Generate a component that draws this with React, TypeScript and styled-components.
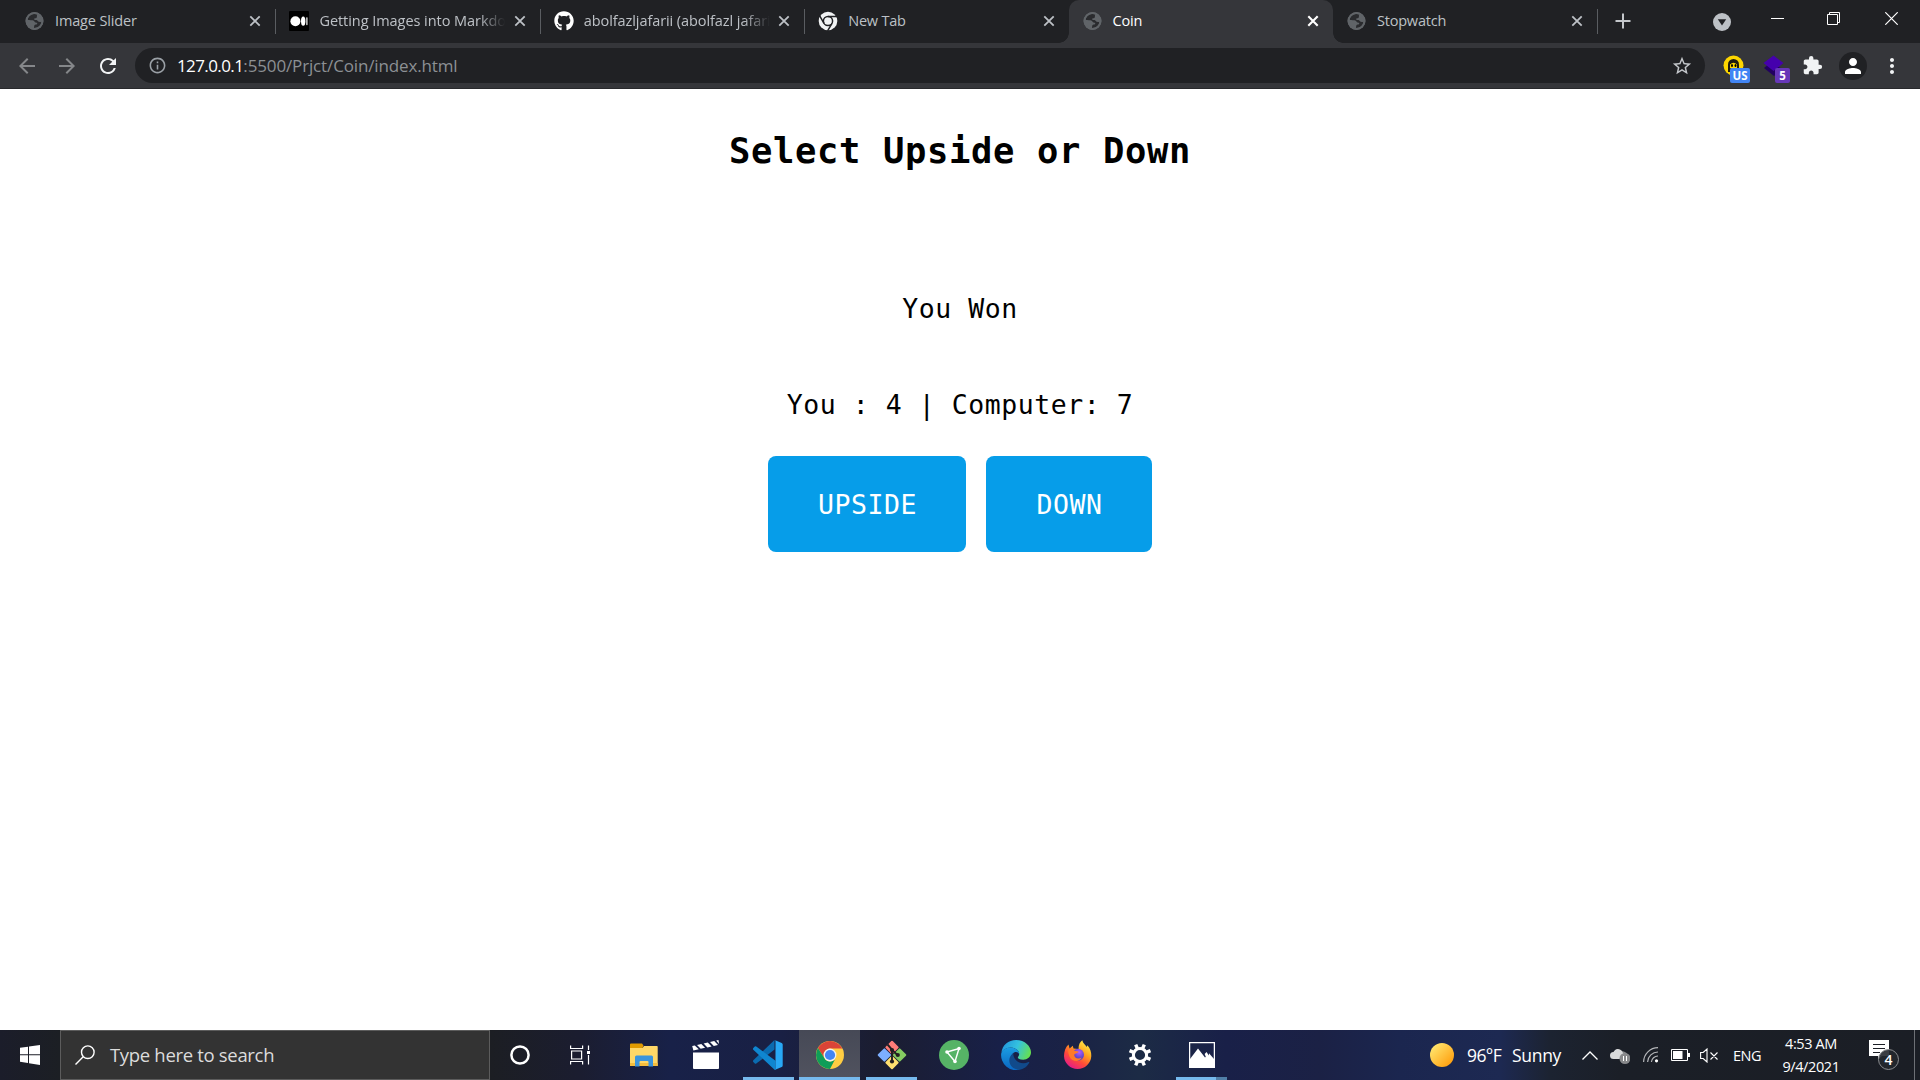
import React from "react";
import styled, { createGlobalStyle, css } from "styled-components";
import { MdExtension, MdPerson, MdRefresh, MdStarBorder, MdInfoOutline, MdArrowBack, MdArrowForward, MdMoreVert } from "react-icons/md";
import { FaGithub } from "react-icons/fa";

const Global = createGlobalStyle`
  * { box-sizing: border-box; }
  html, body, #root { margin: 0; height: 100%; }
  body { overflow: hidden; background: #fff; font-family: "Open Sans", "Noto Sans", sans-serif; }
  svg { display: block; flex: none; }
`;

const Screen = styled.div`
  width: 1920px;
  height: 1080px;
  display: flex;
  flex-direction: column;
`;

const TabStrip = styled.div`
  height: 43px;
  flex: none;
  background: #202124;
  display: flex;
  padding-left: 11px;
`;

const Tab = styled.div<{ $active?: boolean; $line?: boolean }>`
  position: relative;
  width: 264.4px;
  height: 43px;
  flex: none;
  display: flex;
  align-items: center;
  padding: 0 11px 1px 14px;
  color: ${(p) => (p.$active ? "#fff" : "#bdc1c6")};
  ${(p) =>
    p.$line &&
    css`
      &::after {
        content: "";
        position: absolute;
        right: -1px;
        top: 9px;
        width: 1px;
        height: 25px;
        background: #5a5d61;
      }
    `}
  ${(p) =>
    p.$active &&
    css`
      background: #35363a;
      border-radius: 10px 10px 0 0;
      &::before,
      &::after {
        content: "";
        position: absolute;
        bottom: 0;
        width: 10px;
        height: 10px;
      }
      &::before {
        left: -10px;
        background: radial-gradient(circle at 0 0, transparent 9.5px, #35363a 10px);
      }
      &::after {
        right: -10px;
        background: radial-gradient(circle at 100% 0, transparent 9.5px, #35363a 10px);
      }
    `}
`;

const TabTitle = styled.div<{ $fade?: boolean; $spacing: number }>`
  margin-left: 10px;
  width: 188px;
  font-size: 14.5px;
  line-height: 20px;
  letter-spacing: ${(p) => p.$spacing}px;
  white-space: nowrap;
  ${(p) => p.$fade && css`mask-image: linear-gradient(90deg, #000 85%, transparent 99%);`}
`;

const TabClose = styled.div`
  margin-left: auto;
  width: 18px;
  display: flex;
  justify-content: center;
`;

const NewTab = styled.div`
  margin: 13px 0 0 18px;
`;

const WindowControls = styled.div`
  margin-left: auto;
  display: flex;
  align-items: flex-start;
  padding: 12px 22px 0 0;
`;

const ControlSlot = styled.div<{ $gap: number; $drop?: number }>`
  margin-right: ${(p) => p.$gap}px;
  padding-top: ${(p) => p.$drop ?? 0}px;
`;

const Toolbar = styled.div`
  height: 46px;
  flex: none;
  background: #35363a;
  border-bottom: 1px solid #28292c;
  display: flex;
  align-items: center;
  padding-left: 15px;
  color: #f1f3f4;
`;

const NavButton = styled.div<{ $dim?: boolean; $gap: number }>`
  display: flex;
  margin-right: ${(p) => p.$gap}px;
  color: ${(p) => (p.$dim ? "#85878a" : "#f1f3f4")};
`;

const AddressBar = styled.div`
  width: 1570px;
  height: 35px;
  border-radius: 18px;
  background: #202124;
  display: flex;
  align-items: center;
  padding: 0 12px 0 13px;
  color: #9aa0a6;
`;

const Url = styled.div`
  margin-left: 10px;
  flex: 1;
  font-size: 17px;
  line-height: 24px;
  letter-spacing: -0.14px;
  color: #8c9094;
  white-space: nowrap;
`;

const Host = styled.span`
  color: #fff;
  letter-spacing: -0.6px;
`;

const Extension = styled.div<{ $gap: number }>`
  position: relative;
  display: flex;
  margin-left: ${(p) => p.$gap}px;
`;

const Badge = styled.span<{ $color: string; $width: number }>`
  position: absolute;
  left: ${(p) => (p.$width > 16 ? 7 : 12)}px;
  top: 13px;
  width: ${(p) => p.$width}px;
  height: 15px;
  border-radius: 2px;
  background: ${(p) => p.$color};
  color: #fff;
  font: 700 11.5px/16px "Open Sans", sans-serif;
  text-align: center;
`;

const Avatar = styled.div`
  margin-left: 16px;
  width: 28px;
  height: 28px;
  border-radius: 50%;
  background: #202124;
  display: grid;
  place-items: center;
`;

const Game = styled.main`
  flex: 1;
  background: #fff;
  color: #000;
  display: flex;
  flex-direction: column;
  align-items: center;
  font-family: "DejaVu Sans Mono", monospace;
`;

const Heading = styled.h1`
  margin: 39px 0 0;
  font-size: 35.5px;
  line-height: 46px;
  letter-spacing: 0.63px;
  font-weight: 700;
`;

const Line = styled.p<{ $top: number }>`
  margin: ${(p) => p.$top}px 0 0;
  font-size: 26.5px;
  line-height: 36px;
  letter-spacing: 0.55px;
  white-space: pre;
`;

const Choices = styled.div`
  margin-top: 33px;
  display: flex;
  gap: 20px;
`;

const Choice = styled.button<{ $width: number }>`
  width: ${(p) => p.$width}px;
  height: 96px;
  padding: 1px 0 0 1px;
  border: 0;
  border-radius: 8px;
  background: #069de9;
  color: #fff;
  font: 26.5px/36px "DejaVu Sans Mono", monospace;
  letter-spacing: 0.55px;
`;

const Taskbar = styled.div`
  height: 50px;
  flex: none;
  display: flex;
  align-items: center;
  color: #fff;
  background: linear-gradient(
    90deg,
    #1b1d2a 0, #1c1f24 60px, #1c1e23 490px, #1b1d30 580px, #182148 670px, #192044 780px,
    #1b1d30 880px, #182048 1000px, #1a2245 1070px, #1c2b45 1140px, #192048 1225px,
    #1b2145 1320px, #1b264f 1400px, #1d2952 1500px, #1c2331 1550px, #1b1f27 1620px, #1b1e25 1920px
  );
`;

const Start = styled.div`
  width: 60px;
  display: grid;
  place-items: center;
`;

const Search = styled.div`
  width: 430px;
  height: 50px;
  border: 1px solid #5c5c5c;
  background: #333;
  display: flex;
  align-items: center;
  padding: 0 0 1px 14px;
  gap: 15px;
  color: #dcdcdc;
  font-size: 18.5px;
  letter-spacing: -0.32px;
`;

const TaskButton = styled.div<{ $width?: number; $active?: boolean; $line?: number; $indent?: number }>`
  position: relative;
  width: ${(p) => p.$width ?? 62}px;
  height: 50px;
  padding-left: ${(p) => p.$indent ?? 0}px;
  display: grid;
  place-items: center;
  ${(p) => p.$active && css`background: linear-gradient(#464956, #51535f);`}
  &::after {
    content: "";
    position: absolute;
    bottom: 0;
    left: 50%;
    height: 3px;
    width: ${(p) => p.$line ?? 0}px;
    margin-left: ${(p) => -(p.$line ?? 0) / 2}px;
    background: #76b9ed;
  }
`;

const SecondWindow = styled.span`
  position: absolute;
  z-index: 1;
  bottom: 0;
  left: 45px;
  width: 11px;
  height: 3px;
  background: #517fa8;
`;

const Tray = styled.div`
  margin-left: auto;
  height: 50px;
  display: flex;
  align-items: center;
`;

const TrayItem = styled.div<{ $gap: number }>`
  margin-right: ${(p) => p.$gap}px;
`;

const TrayText = styled.div<{ $size: number; $width: number; $spacing?: number }>`
  width: ${(p) => p.$width}px;
  font-size: ${(p) => p.$size}px;
  line-height: 23px;
  letter-spacing: ${(p) => p.$spacing ?? 0}px;
  white-space: nowrap;
`;

const Clock = styled.div`
  width: 60px;
  margin: 0 28px 0 19px;
  font-size: 14.5px;
  line-height: 23px;
  letter-spacing: -0.4px;
  text-align: center;
  white-space: nowrap;
`;

const Notice = styled.div`
  position: relative;
  width: 30px;
  height: 30px;
`;

const Count = styled.span`
  position: absolute;
  left: 9px;
  top: 9px;
  width: 21px;
  height: 21px;
  border-radius: 50%;
  border: 1px solid #8b8d90;
  background: rgba(36, 39, 45, 0.9);
  font: 600 14px/19px "Open Sans", sans-serif;
  text-align: center;
`;

const ShowDesktop = styled.div`
  margin-left: 15px;
  width: 6px;
  height: 50px;
  border-left: 1px solid #6d7075;
`;

const Globe = () => (
  <svg width="20" height="20" viewBox="0 0 20 20">
    <circle cx="9.500" cy="10" r="9" fill="#606468" />
    <path d="M9.500 3C6 3 3 5.500 2.600 9c1.400 0 2.400.3 3.800.2 1.500 0 2.500.4 3.200 1.500.4.900 1.500.800 2.500 1 .5.900-.2 1.700-1.300 1.900-1.300.2-1.800.8-1.700 3.300 3.600.2 6.800-2.300 7.300-6.100-1.600.5-3 .2-3.700-.9-.6-1-1.900-.8-2.800-.9-.9-.4-1-1.600.1-1.800 1.300 0 2.100-.7 1.900-1.800-.1-.9.1-1.500.600-2A7 7 0 0 0 9.500 3z" fill="#2a2b2e" />
    <circle cx="9.500" cy="10" r="8" fill="none" stroke="#606468" strokeWidth="1.800" />
  </svg>
);

const Medium = () => (
  <svg width="20" height="20" viewBox="0 0 20 20">
    <rect width="20" height="20" rx="1" fill="#000" />
    <circle cx="6.4" cy="10.2" r="5" fill="#fff" />
    <ellipse cx="14.2" cy="10.2" rx="2.2" ry="4.6" fill="#fff" />
    <rect x="17.3" y="6.2" width="1.2" height="8" rx=".6" fill="#fff" />
  </svg>
);

const ChromeMono = () => (
  <svg width="20" height="20" viewBox="0 0 20 20">
    <circle cx="10" cy="10" r="9.3" fill="#f1f3f4" />
    <circle cx="10" cy="10" r="4.6" fill="none" stroke="#202124" strokeWidth="1.5" />
    <path d="M10 5.4h9M6 12.3 1.7 4.9M14 12.3l-4.4 7.5" stroke="#202124" strokeWidth="1.5" />
  </svg>
);

const Cross = ({ bold }: { bold?: boolean }) => (
  <svg width="12" height="12" viewBox="0 0 12 12">
    <path d="m1.3 1.3 9.4 9.4m0-9.4-9.4 9.4" stroke="currentColor" strokeWidth={bold ? 2.1 : 1.8} />
  </svg>
);

const tabs = [
  { title: "Image Slider", icon: <Globe />, line: true, spacing: -0.15 },
  { title: "Getting Images into Markdo", icon: <Medium />, line: true, fade: true, spacing: -0.05 },
  { title: "abolfazljafarii (abolfazl jafari", icon: <FaGithub size={20} color="#fff" />, line: true, fade: true, spacing: -0.08 },
  { title: "New Tab", icon: <ChromeMono />, spacing: -0.2 },
  { title: "Coin", icon: <Globe />, active: true, spacing: -0.2 },
  { title: "Stopwatch", icon: <Globe />, line: true, spacing: -0.2 },
];

const Folder = () => (
  <svg width="28" height="24" viewBox="0 0 28 24">
    <path d="M0 1.5Q0 .5 1 .5h11l1.5 2L12 6H0z" fill="#e09a00" />
    <path d="M0 5h12.5L14 3h13q.7 0 .7.8V23H0z" fill="#ffd767" />
    <path d="M0 20h27.7v3H0z" fill="#f5bd3d" />
    <path d="M5 23.6V14q0-1.5 1.5-1.5h15q1.5 0 1.5 1.5v9.6h-4.5V19q0-1-1-1h-7q-1 0-1 1v4.6z" fill="#3b94dd" />
  </svg>
);

const Clapper = () => (
  <svg width="28" height="30" viewBox="0 0 28 30">
    <path d="M1 12.5h26V28q0 1-1 1H2q-1 0-1-1z" fill="#fff" />
    <path d="M.2 6 2.8 5.4l4 3.8L1.4 10.5zM5 4.9l4.3-1 3.8 3.900-4.400 1zM11.600 3.400l4.200-1 3.800 4-4.200 1zM18 1.900l4.200-1 3.800 4-4.200 1zM24.200.5l2.300-.5.5 4z" fill="#fff" />
  </svg>
);

const VsCode = () => (
  <svg width="32" height="32" viewBox="0 0 32 32">
    <path d="M22.500 1v9.500L4.300 24.600q-.8.500-1.500 0L1.300 23q-.7-.9 0-1.800z" fill="#0b6bb0" />
    <path d="m1.300 9 1.500-1.500q.7-.6 1.500 0L23.500 21.800V31q-.7 0-1.200-.6L1.300 10.800q-.7-.9 0-1.800z" fill="#0f86d0" />
    <path d="m22.500 1 7.200 3q1 .5 1 1.500v21q0 1-1 1.500l-7.200 3q1 .2 1-1.400V2.400q0-1.600-1-1.400z" fill="#28a8f5" />
  </svg>
);

const Chrome = () => (
  <svg width="28" height="28" viewBox="0 0 28 28">
    <circle cx="14" cy="14" r="14" fill="#ffcd42" />
    <path d="M1.9 7A14 14 0 0 1 26.1 7L26.1 7.6H14A6.4 6.4 0 0 0 8.5 17.2z" fill="#db4437" />
    <path d="M1.9 7A14 14 0 0 0 14 28l5.6-10.800A6.4 6.4 0 0 1 8.500 17.200z" fill="#0f9d58" />
    <circle cx="14" cy="14" r="6.4" fill="#f1f1f1" />
    <circle cx="14" cy="14" r="5.1" fill="#4285f4" />
  </svg>
);

const Git = () => (
  <svg width="30" height="30" viewBox="0 0 30 30">
    <g transform="rotate(45 15 15)">
      <rect x="4.6" y="4.6" width="10" height="10" rx="1" fill="#ff7c78" />
      <rect x="15.4" y="4.6" width="10" height="10" rx="1" fill="#85cc61" />
      <rect x="15.4" y="15.4" width="10" height="10" rx="1" fill="#ffe070" />
      <rect x="4.6" y="15.4" width="10" height="10" rx="1" fill="#7caeff" />
    </g>
    <path d="M10.500 4.500 15 9.500V21M15 10l5.500 5" stroke="#231f20" strokeWidth="1.900" fill="none" />
    <circle cx="15" cy="10" r="2.100" fill="#231f20" />
    <circle cx="15" cy="21.500" r="2.100" fill="#231f20" />
    <circle cx="20.800" cy="15" r="2.100" fill="#231f20" />
  </svg>
);

const GreenTriangle = () => (
  <svg width="30" height="30" viewBox="0 0 30 30">
    <circle cx="15" cy="15" r="15" fill="#56b366" />
    <path d="M8 12 20 8.500 16 21.500z" fill="none" stroke="#fff" strokeWidth="1.400" />
    <circle cx="8" cy="12" r="1.800" fill="#fff" />
    <circle cx="20" cy="8.500" r="1.800" fill="#fff" />
    <circle cx="16" cy="21.500" r="1.800" fill="#fff" />
  </svg>
);

const Edge = () => (
  <svg width="30" height="30" viewBox="0 0 30 30">
    <defs>
      <linearGradient id="edgeTop" x1="0" y1=".3" x2="1" y2=".6">
        <stop offset="0" stopColor="#2196dc" />
        <stop offset=".5" stopColor="#34c2df" />
        <stop offset="1" stopColor="#66e04f" />
      </linearGradient>
      <linearGradient id="edgeBody" x1="0" y1="0" x2="0" y2="1">
        <stop offset="0" stopColor="#1b9de2" />
        <stop offset="1" stopColor="#0a66c2" />
      </linearGradient>
    </defs>
    <path d="M.3 13C1.3 5 7.400 0 15 0c9 0 15 6.500 15 12.300 0 4.600-3.700 7.500-7.700 7.500-3.700 0-5.500-1.300-5.500-2.300 0-.9 1.400-1.300 1.400-3.500 0-3.500-3.800-6.500-8.700-6.500C5 7.500 1 10.700.3 13z" fill="url(#edgeTop)" />
    <path d="M.2 13.500C1.200 10 5 7.500 9.500 7.500c4.900 0 8.700 3 8.700 6.500-1-1.800-2.500-2.300-4-2-3 .6-5 5-3.400 9.500 1 3.500 3.700 6.700 8 8.200A15 15 0 0 1 .2 13.500z" fill="url(#edgeBody)" />
    <path d="M12.500 13C9 15.500 7.500 19 8.700 23c1 3.700 5 6.700 9.500 6.700 4.400-.5 8.300-3.300 10-7 .3-.7-.2-1-.8-.7-4.700 2.300-10.700 1.200-13.400-3-1.300-2-2-4-1.500-6z" fill="#114a8b" />
  </svg>
);

const Firefox = () => (
  <svg width="30" height="30" viewBox="0 0 30 30">
    <defs>
      <linearGradient id="foxBody" x1=".85" y1=".05" x2=".25" y2="1">
        <stop offset="0" stopColor="#fff04a" />
        <stop offset=".35" stopColor="#ffa51f" />
        <stop offset=".65" stopColor="#ff4b38" />
        <stop offset="1" stopColor="#e3178f" />
      </linearGradient>
      <radialGradient id="foxCore" cx=".6" cy=".3">
        <stop offset="0" stopColor="#b45bff" />
        <stop offset="1" stopColor="#5a45c8" />
      </radialGradient>
    </defs>
    <path d="M5.500 4.500 6.600 8.400 9.800 5.800 10.500 8.500 15.500 9C15.500 4.500 17 2 19.300.3c.5 3 2.700 4.200 4.500 6.700l.6-1.700c3 3.400 4 6.900 3.900 10.700A13.700 13.700 0 0 1 14.600 29 13.500 13.500 0 0 1 1 16C1 11.500 2.500 7 5.500 4.500z" fill="url(#foxBody)" />
    <circle cx="15" cy="14.800" r="6" fill="url(#foxCore)" />
    <path d="M5.500 9.500c3-1.500 5.500 0 6 1.200l4 .7c0 2-3.800 1.700-4.300 3.400 0 3.200 3.800 5 7.500 2.700-2 5-9.700 4.300-12-.5C5.500 14.500 4.800 11.500 5.500 9.500z" fill="#ff7a2a" />
  </svg>
);

const Gear = () => (
  <svg width="24" height="24" viewBox="-12 -12 24 24">
    <circle r="6.600" fill="none" stroke="#fff" strokeWidth="3" />
    {[22.5, 67.5, 112.5, 157.5, 202.5, 247.5, 292.5, 337.5].map((a) => (
      <rect key={a} x="-1.700" y="-11.300" width="3.400" height="4.500" fill="#fff" transform={`rotate(${a})`} />
    ))}
  </svg>
);

const Photos = () => (
  <svg width="26" height="26" viewBox="0 0 26 26">
    <path d="M.6.600h24.800v24.800H.6z" fill="none" stroke="#fff" strokeWidth="1.300" />
    <path d="M1 17 9 6.500l7 9 .8-.8-1.200-2.700 2-2 2.200 3.500.2-2.200L25 17v8.500H1z" fill="#fff" />
  </svg>
);

export default function App() {
  return (
    <Screen>
      <Global />
      <TabStrip>
        {tabs.map((t) => (
          <Tab key={t.title} $active={t.active} $line={t.line}>
            {t.icon}
            <TabTitle $fade={t.fade} $spacing={t.spacing}>{t.title}</TabTitle>
            <TabClose><Cross bold={t.active} /></TabClose>
          </Tab>
        ))}
        <NewTab>
          <svg width="16" height="16" viewBox="0 0 16 16"><path d="M8 .500v15M.5 8h15" stroke="#c4c7cb" strokeWidth="2" /></svg>
        </NewTab>
        <WindowControls>
          <ControlSlot $gap={40} $drop={1}>
            <svg width="18" height="18" viewBox="0 0 18 18"><circle cx="9" cy="9" r="9" fill="#bdc1c6" /><path d="M4.800 6.200h8.400L9 12.500z" fill="#202124" /></svg>
          </ControlSlot>
          <ControlSlot $gap={43} $drop={6}>
            <svg width="13" height="1"><rect width="13" height="1" fill="#fff" /></svg>
          </ControlSlot>
          <ControlSlot $gap={45}>
            <svg width="13" height="13" fill="none" stroke="#fff"><path d="M.5 2.500h10v10H.5zM2.500 2.500v-2h10v10h-2" /></svg>
          </ControlSlot>
          <ControlSlot $gap={0}>
            <svg width="13" height="13" stroke="#fff" strokeWidth="1.200"><path d="m.3.300 12.400 12.400m0-12.400L.3 12.700" /></svg>
          </ControlSlot>
        </WindowControls>
      </TabStrip>

      <Toolbar>
        <NavButton $dim $gap={16}><MdArrowBack size={24} /></NavButton>
        <NavButton $dim $gap={17}><MdArrowForward size={24} /></NavButton>
        <NavButton $gap={15}><MdRefresh size={24} /></NavButton>
        <AddressBar>
          <MdInfoOutline size={19} />
          <Url><Host>127.0.0.1</Host>:5500/Prjct/Coin/index.html</Url>
          <MdStarBorder size={22} color="#c4c7cb" />
        </AddressBar>
        <Extension $gap={18}>
          <svg width="21" height="21" viewBox="0 0 21 21">
            <circle cx="10.500" cy="10.500" r="10" fill="#fdd600" />
            <path d="M5 17V9.500a5.500 5.500 0 0 1 11 0V17z" fill="#1e1b10" />
            <path d="M7 9.500Q10.500 6 14 9.500v3.500q-3.500 2-7 0z" fill="#fdd600" />
            <ellipse cx="9" cy="10.500" rx="1" ry="1.500" /><ellipse cx="12.500" cy="10.500" rx="1" ry="1.500" />
          </svg>
          <Badge $color="#4285f4" $width={20}>US</Badge>
        </Extension>
        <Extension $gap={19}>
          <svg width="21" height="21" viewBox="0 0 21 21">
            <path d="m1 13 6-5 13 6-9 7z" fill="#220061" />
            <path d="M10.500.500 20.500 8 10.500 16 .5 8z" fill="#4500ad" />
          </svg>
          <Badge $color="#6737b8" $width={15}>5</Badge>
        </Extension>
        <Extension $gap={18}><MdExtension size={21} /></Extension>
        <Avatar><MdPerson size={24} color="#fff" /></Avatar>
        <Extension $gap={13}><MdMoreVert size={24} /></Extension>
      </Toolbar>

      <Game>
        <Heading>Select Upside or Down</Heading>
        <Line $top={117}>You Won</Line>
        <Line $top={60}>You : 4 | Computer: 7</Line>
        <Choices>
          <Choice $width={198}>UPSIDE</Choice>
          <Choice $width={166}>DOWN</Choice>
        </Choices>
      </Game>

      <Taskbar>
        <Start>
          <svg width="20" height="20" viewBox="0 0 20 20"><path d="M0 2.800 8 1.700v7.600H0zM9 1.500 20 0v9.300H9zM0 10.300h8v7.600l-8-1.100zM9 10.300h11V20L9 18.200z" fill="#fff" /></svg>
        </Start>
        <Search>
          <svg width="20" height="20" viewBox="0 0 20 20" fill="none" stroke="#fff" strokeWidth="1.400"><circle cx="12.800" cy="7.200" r="6.300" /><path d="M8.200 11.800.5 19.500" /></svg>
          Type here to search
        </Search>
        <TaskButton $width={60}><svg width="20" height="20"><circle cx="10" cy="10" r="8.600" fill="none" stroke="#fff" strokeWidth="2.500" /></svg></TaskButton>
        <TaskButton $width={60}>
          <svg width="20" height="20" fill="none" stroke="#fff" strokeWidth="1.200"><path d="M.6.500v3h12V.500M.6 19.500v-3h12v3M1.600 6h10v8h-10zM18.500.500v4.500M18.500 10v9.500" /><path d="M17 6h3v3h-3z" fill="#fff" stroke="none" /></svg>
        </TaskButton>
        <TaskButton $width={65} $indent={3}><Folder /></TaskButton>
        <TaskButton><Clapper /></TaskButton>
        <TaskButton $line={51}><VsCode /></TaskButton>
        <TaskButton $active $line={61} $width={61}><Chrome /></TaskButton>
        <TaskButton $line={51} $width={63}><Git /></TaskButton>
        <TaskButton><GreenTriangle /></TaskButton>
        <TaskButton><Edge /></TaskButton>
        <TaskButton><Firefox /></TaskButton>
        <TaskButton><Gear /></TaskButton>
        <TaskButton $line={51} $width={61}><Photos /><SecondWindow /></TaskButton>

        <Tray>
          <TrayItem $gap={13}>
            <svg width="24" height="24"><defs><linearGradient id="sun" x1="0" y1="0" x2="1" y2="1"><stop offset=".15" stopColor="#ffe26a" /><stop offset="1" stopColor="#ff9500" /></linearGradient></defs><circle cx="12" cy="12" r="12" fill="url(#sun)" /></svg>
          </TrayItem>
          <TrayText $size={17.5} $width={45} $spacing={-0.6}>96°F</TrayText>
          <TrayText $size={17.5} $width={70} $spacing={-0.3}>Sunny</TrayText>
          <TrayItem $gap={12}><svg width="16" height="9" fill="none" stroke="#fff" strokeWidth="1.300"><path d="M.5 8.500 8 1l7.500 7.500" /></svg></TrayItem>
          <TrayItem $gap={13}>
            <svg width="20" height="20"><path d="M8 8a6 6 0 0 1 10 3v2H8z" fill="#858789" /><path d="M3.500 14a3.500 3.500 0 0 1 0-7A5 5 0 0 1 12 6l4 8z" fill="#d8d9da" /><circle cx="15" cy="13.500" r="5.500" fill="#88898b" /><path d="M13.500 11v5M16.500 11v5" stroke="#fff" /></svg>
          </TrayItem>
          <TrayItem $gap={12}>
            <svg width="16" height="16" fill="none" stroke="#b4b6b9" strokeWidth="1.200"><path d="M.6 15A14.500 14.500 0 0 1 15 .7M4.600 15A10.500 10.500 0 0 1 15 5M8.400 15A6.500 6.500 0 0 1 15 9" /><circle cx="13.500" cy="13.800" r="1.600" fill="#fff" stroke="none" /></svg>
          </TrayItem>
          <TrayItem $gap={10}>
            <svg width="19" height="12"><path d="M.5.500h16v11H.5z" fill="none" stroke="#fff" /><path d="M2 2h9.500v8H2zM17 4h2v4h-2z" fill="#fff" /></svg>
          </TrayItem>
          <TrayItem $gap={15}>
            <svg width="18" height="15" fill="none" stroke="#fff" strokeWidth="1.100"><path d="M.6 4.500h2.600L7 1v13l-3.800-3.500H.6zM10.500 4.500l7 7m0-7-7 7" /></svg>
          </TrayItem>
          <TrayText $size={14.5} $width={29} $spacing={-0.5}>ENG</TrayText>
          <Clock>4:53 AM<br />9/4/2021</Clock>
          <Notice>
            <svg width="21" height="20"><path d="M0 0h20v16h-7l-4 3.500V16H0z" fill="#fff" /><path d="M4 4.500h12M4 8.500h12M4 12.500h7" stroke="#1b1e25" /></svg>
            <Count>4</Count>
          </Notice>
          <ShowDesktop />
        </Tray>
      </Taskbar>
    </Screen>
  );
}
